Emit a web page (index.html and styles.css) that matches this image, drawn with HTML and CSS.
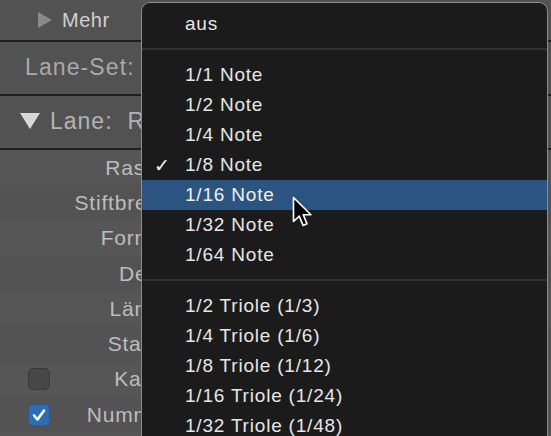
FILE: index.html
```html
<!DOCTYPE html>
<html>
<head>
<meta charset="utf-8">
<link rel="stylesheet" href="styles.css">
</head>
<body>
<div class="panel">
  <div class="row row-top">
    <span class="tri-right"></span><span class="mehr">Mehr</span>
  </div>
  <div class="row row-set"><span class="set-label">Lane-Set:</span></div>
  <div class="row row-lane"><span class="tri-down"></span><span class="lane-label">Lane:</span><span class="lane-name">Raster</span></div>
  <div class="props">
    <div class="prop"><span class="box-slot"></span><span class="plabel">Raster</span></div>
    <div class="prop alt"><span class="box-slot"></span><span class="plabel">Stiftbreite</span></div>
    <div class="prop"><span class="box-slot"></span><span class="plabel">Format</span></div>
    <div class="prop alt"><span class="box-slot"></span><span class="plabel">Delta</span></div>
    <div class="prop"><span class="box-slot"></span><span class="plabel">Länge</span></div>
    <div class="prop alt"><span class="box-slot"></span><span class="plabel">Status</span></div>
    <div class="prop"><span class="box-slot"><span class="cbox"></span></span><span class="plabel">Kanal</span></div>
    <div class="prop alt"><span class="box-slot"><span class="cbox on"><svg viewBox="0 0 22 22" width="22" height="22"><path d="M6 11.5 L9.5 15.5 L16 6.5" fill="none" stroke="#fff" stroke-width="2.6" stroke-linecap="round" stroke-linejoin="round"/></svg></span></span><span class="plabel">Nummer</span></div>
  </div>
</div>

<div class="menu">
  <div class="item">aus</div>
  <div class="sep"></div>
  <div class="item">1/1 Note</div>
  <div class="item">1/2 Note</div>
  <div class="item">1/4 Note</div>
  <div class="item"><span class="check">✓</span>1/8 Note</div>
  <div class="item hl">1/16 Note</div>
  <div class="item">1/32 Note</div>
  <div class="item">1/64 Note</div>
  <div class="sep sep2"></div>
  <div class="item">1/2 Triole (1/3)</div>
  <div class="item">1/4 Triole (1/6)</div>
  <div class="item">1/8 Triole (1/12)</div>
  <div class="item">1/16 Triole (1/24)</div>
  <div class="item">1/32 Triole (1/48)</div>
</div>

<svg class="cursor" viewBox="0 0 14 22" width="21" height="33">
  <path d="M1 1 L1 17 L4.8 13.4 L7.4 19.6 L10 18.5 L7.5 12.5 L12.6 12.5 Z" fill="#000" stroke="#fff" stroke-width="1.1" stroke-linejoin="round"/>
</svg>
</body>
</html>
```
FILE: styles.css
```css
* { box-sizing: border-box; }
html, body {
  margin: 0;
  padding: 0;
}
body {
  width: 551px;
  height: 436px;
  overflow: hidden;
  background: #555555;
  font-family: "Liberation Sans", Arial, sans-serif;
  position: relative;
}
.panel {
  width: 551px;
  display: flex;
  flex-direction: column;
}
.row {
  display: flex;
  align-items: center;
  border-bottom: 2px solid #1f1f1f;
  background: #525252;
}
.row-top {
  height: 42px;
  padding-left: 38px;
}
.tri-right {
  width: 0;
  height: 0;
  border-top: 8px solid transparent;
  border-bottom: 8px solid transparent;
  border-left: 14px solid #8a8a8a;
  margin-right: 10px;
}
.mehr {
  color: #d0d0d0;
  font-size: 20px;
  letter-spacing: 0.5px;
}
.row-set {
  height: 54px;
  padding-left: 25px;
  padding-bottom: 2px;
}
.set-label {
  color: #a9a9a9;
  font-size: 23px;
  letter-spacing: 1.1px;
}
.row-lane {
  height: 54px;
  padding-left: 20px;
  padding-bottom: 2px;
}
.tri-down {
  width: 0;
  height: 0;
  border-left: 10px solid transparent;
  border-right: 10px solid transparent;
  border-top: 16px solid #d8d8d8;
  margin-right: 10px;
}
.lane-label {
  color: #b4b4b4;
  font-size: 23px;
  letter-spacing: 1px;
  margin-right: 15px;
}
.lane-name {
  color: #b4b4b4;
  font-size: 23px;
}
.props {
  display: flex;
  flex-direction: column;
}
.prop {
  height: 35.3px;
  display: flex;
  align-items: center;
  background: #565656;
}
.prop.alt {
  background: #535353;
}
.box-slot {
  width: 28px;
  margin-left: 28px;
  display: flex;
  align-items: center;
}
.cbox {
  width: 22px;
  height: 22px;
  border-radius: 5px;
  background: #474747;
  border: 1px solid #3a3a3a;
  display: block;
}
.cbox.on {
  background: #2d6db5;
  border-color: #2a5a90;
}
.cbox svg { display: block; margin: -1px; }
.plabel {
  width: 116px;
  text-align: right;
  color: #bdbdbd;
  font-size: 21px;
  letter-spacing: 0.8px;
}
.menu {
  position: absolute;
  left: 141px;
  top: 2px;
  width: 407px;
  height: 460px;
  background: #1b1b1b;
  border: 1px solid #8c8c8c;
  border-radius: 9px;
  padding-top: 6px;
  overflow: hidden;
}
.item {
  height: 30px;
  line-height: 30px;
  padding-left: 43px;
  color: #e6e6e6;
  font-size: 19px;
  letter-spacing: 0.8px;
  position: relative;
}
.item.hl {
  background: #2b5480;
  color: #eef2f7;
}
.check {
  position: absolute;
  left: 12px;
  top: 0;
  font-family: "DejaVu Sans", sans-serif;
  font-size: 19px;
  font-weight: bold;
  color: #f2f2f2;
}
.sep {
  height: 2px;
  background: #313131;
  margin: 9px 0 10px;
}
.cursor {
  position: absolute;
  left: 292px;
  top: 196px;
}
```
